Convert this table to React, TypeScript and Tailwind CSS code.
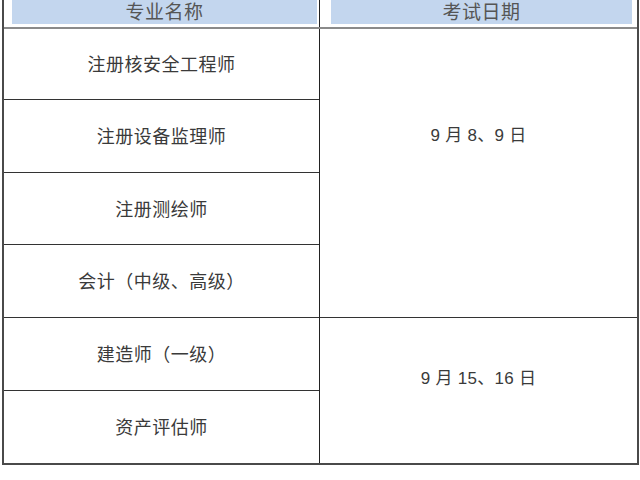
import React from "react";

const font = { fontFamily: '"Liberation Sans", "Noto Sans CJK SC", sans-serif' };

const rows: { name: string; h: string }[] = [
  { name: "注册核安全工程师", h: "h-[71px]" },
  { name: "注册设备监理师", h: "h-[73px]" },
  { name: "注册测绘师", h: "h-[72px]" },
  { name: "会计（中级、高级）", h: "h-[73px]" },
  { name: "建造师（一级）", h: "h-[73px]" },
  { name: "资产评估师", h: "h-[72px]" },
];

export default function App() {
  return (
    <div className="w-[640px] h-[480px] bg-white overflow-hidden pl-[2px]" style={font}>
      <div className="w-[637px] border-l-2 border-r-2 border-b-2 border-[#4a4a4a] flex flex-col">
        {/* header */}
        <div className="flex h-[29px] border-b-2 border-[#8a8a8a]">
          <div className="w-[316px] border-r border-[#222] pl-[8px] pr-[2px] pb-[3px]">
            <div className="h-full bg-[#c3d6ee] flex items-center justify-center pt-[3px] text-[19px] tracking-[0.5px] text-[#555]">
              专业名称
            </div>
          </div>
          <div className="flex-1 pl-[11px] pr-[5px] pb-[3px]">
            <div className="h-full bg-[#c3d6ee] flex items-center justify-center pt-[3px] text-[19px] tracking-[0.5px] text-[#555]">
              考试日期
            </div>
          </div>
        </div>
        {/* body */}
        <div className="flex">
          <div className="w-[316px] border-r border-[#222] flex flex-col">
            {rows.map((r, i) => (
              <div
                key={i}
                className={`${r.h} flex items-center justify-center pt-[3px] text-[18px] tracking-[0.5px] text-[#3a3a3a] ${
                  i < rows.length - 1 ? "border-b border-[#333]" : ""
                }`}
              >
                {r.name}
              </div>
            ))}
          </div>
          <div className="flex-1 flex flex-col">
            <div className="h-[289px] border-b border-[#333] flex justify-center pt-[97px] text-[17px] text-[#3a3a3a]">
              <span className="leading-[20px] tracking-[0.3px]">9 月 8、9 日</span>
            </div>
            <div className="h-[145px] flex justify-center pt-[51px] text-[17px] text-[#3a3a3a]">
              <span className="leading-[20px] tracking-[0.3px]">9 月 15、16 日</span>
            </div>
          </div>
        </div>
      </div>
    </div>
  );
}
